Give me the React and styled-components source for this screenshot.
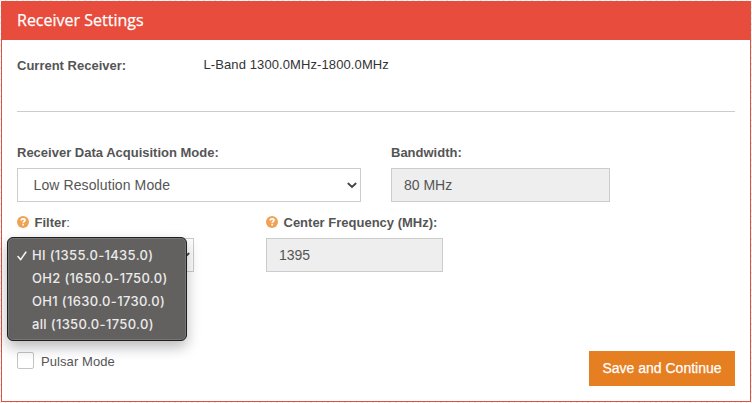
import React from 'react';
import styled, { createGlobalStyle } from 'styled-components';

const Global = createGlobalStyle`
  * { box-sizing: border-box; }
  body {
    margin: 0;
    background-color: #fafafa;
    background-image: repeating-linear-gradient(135deg, #e9e9e9 0 1px, #fbfbfb 1px 4px);
    font-family: "Liberation Sans", Arial, sans-serif;
    color: #555;
    overflow: hidden;
  }
`;

const Page = styled.div`
  height: 403px;
  padding: 1px;
`;

const Panel = styled.section`
  height: 401px;
  background: #fff;
  border: 1px solid #e74c3c;
  display: flex;
  flex-direction: column;
`;

const Header = styled.header`
  height: 38px;
  flex: none;
  padding-left: 15px;
  background: #e74c3c;
  color: #fff;
  font: 400 16px/36px "Open Sans", sans-serif;
  -webkit-text-stroke: 0.25px #fff;
`;

const Body = styled.div`
  flex: 1;
  padding: 0 15px;
  display: flex;
  flex-direction: column;
`;

const Text = styled.span`
  white-space: nowrap;
  font-size: ${(p) => p.$size || 13}px;
  font-weight: ${(p) => (p.$bold ? 700 : 400)};
  letter-spacing: ${(p) => p.$track || 0}px;
  color: ${(p) => p.$color || '#555'};
  padding-top: ${(p) => p.$drop || 0}px;
`;

const Summary = styled.div`
  display: grid;
  grid-template-columns: 186.5px 1fr;
  height: 72px;
  padding-top: 17px;
  line-height: 16px;
  border-bottom: 1px solid #ccc;
`;

const Fields = styled.div`
  display: grid;
  grid-template-columns: ${(p) => p.$columns};
  column-gap: ${(p) => p.$gap}px;
  margin-top: ${(p) => p.$top}px;
`;

const Field = styled.div`
  position: relative;
`;

const Label = styled.div`
  display: flex;
  align-items: center;
  gap: 5.5px;
  height: 16px;
  margin-bottom: 7px;
  line-height: 16px;

  svg {
    margin-bottom: 2px;
  }
`;

const Control = styled.div`
  display: flex;
  align-items: center;
  justify-content: space-between;
  height: 34px;
  padding: 0 3px 0 ${(p) => p.$inset || 12}px;
  border: 1px solid #ccc;
  background: ${(p) => (p.$disabled ? '#eee' : '#fff')};
`;

const Menu = styled.ul`
  position: absolute;
  top: 22px;
  left: -10px;
  width: 180px;
  height: 104px;
  margin: 0;
  padding: 6px 0 0 9px;
  list-style: none;
  border: 1px solid #1f1f1f;
  border-radius: 6px;
  background: #626160;
  box-shadow: inset 0 0 0 1px #777675, 0 6px 14px rgba(0, 0, 0, 0.28);
`;

const Option = styled.li`
  display: grid;
  grid-template-columns: 15px 1fr;
  align-items: center;
  height: 23px;
  font: 500 13px/23px Inter, sans-serif;
  color: #ecebea;
  letter-spacing: 0.34px;
  white-space: nowrap;
`;

const Footer = styled.footer`
  display: flex;
  justify-content: space-between;
  margin-top: 79px;
`;

const CheckRow = styled.label`
  display: flex;
  align-items: center;
  gap: 7px;
  height: 19px;
`;

const Checkbox = styled.span`
  width: 17px;
  height: 17px;
  border: 1px solid #c4c4c4;
  border-radius: 2px;
  background: #fff;
`;

const SaveButton = styled.button`
  width: 146px;
  height: 35px;
  padding: 0 0 2px;
  border: 0;
  background: #e67e22;
  font-family: inherit;
  -webkit-text-stroke: 0.25px #fff;
`;

const HelpIcon = () => (
  <svg width="12" height="12" viewBox="0 0 12 12">
    <circle cx="6" cy="6" r="6" fill="#f0a254" />
    <path d="M4 4.5C4.2 3.3 5 2.8 6.1 2.8c1.1 0 1.9.6 1.9 1.5 0 1.2-1.8 1.2-1.8 2.5" fill="none" stroke="#fff" strokeWidth="1.7" />
    <path d="M5.3 7.8H7v1.7H5.3z" fill="#fff" />
  </svg>
);

const Chevron = () => (
  <svg width="10" height="7" viewBox="0 0 10 7">
    <path d="M1.3 1.5 5 5 8.7 1.5" fill="none" stroke="#444" strokeWidth="1.8" strokeLinecap="round" />
  </svg>
);

const Check = () => (
  <svg width="10" height="10" viewBox="0 0 10 10">
    <path d="M1 5.5 3.7 8.6 8.8 1.2" fill="none" stroke="#f0f0f0" strokeWidth="1.6" strokeLinecap="round" strokeLinejoin="round" />
  </svg>
);

const options = [
  'HI (1355.0-1435.0)',
  'OH2 (1650.0-1750.0)',
  'OH1 (1630.0-1730.0)',
  'all (1350.0-1750.0)',
];

export default function App() {
  return (
    <Page>
      <Global />
      <Panel>
        <Header>Receiver Settings</Header>
        <Body>
          <Summary>
            <Text $bold $drop={1}>Current Receiver:</Text>
            <Text $color="#333" $track={0.1}>L-Band 1300.0MHz-1800.0MHz</Text>
          </Summary>
          <Fields $columns="344px 219px" $gap={30} $top={33}>
            <Field>
              <Label><Text $bold>Receiver Data Acquisition Mode:</Text></Label>
              <Control $inset={15.5}><Text $size={14} $track={0.1}>Low Resolution Mode</Text><Chevron /></Control>
            </Field>
            <Field>
              <Label><Text $bold>Bandwidth:</Text></Label>
              <Control $disabled><Text $size={14}>80 MHz</Text></Control>
            </Field>
          </Fields>
          <Fields $columns="177px 177px" $gap={72} $top={13}>
            <Field>
              <Label><HelpIcon /><Text><b>Filter</b>:</Text></Label>
              <Control><span /><Chevron /></Control>
              <Menu>
                {options.map((option, index) => (
                  <Option key={option}>
                    {index === 0 ? <Check /> : <span />}
                    <span>{option}</span>
                  </Option>
                ))}
              </Menu>
            </Field>
            <Field>
              <Label><HelpIcon /><Text $bold>Center Frequency (MHz):</Text></Label>
              <Control $disabled><Text $size={14}>1395</Text></Control>
            </Field>
          </Fields>
          <Footer>
            <CheckRow><Checkbox /><Text $drop={2} $track={0.08}>Pulsar Mode</Text></CheckRow>
            <SaveButton><Text $size={14} $color="#fff">Save and Continue</Text></SaveButton>
          </Footer>
        </Body>
      </Panel>
    </Page>
  );
}
